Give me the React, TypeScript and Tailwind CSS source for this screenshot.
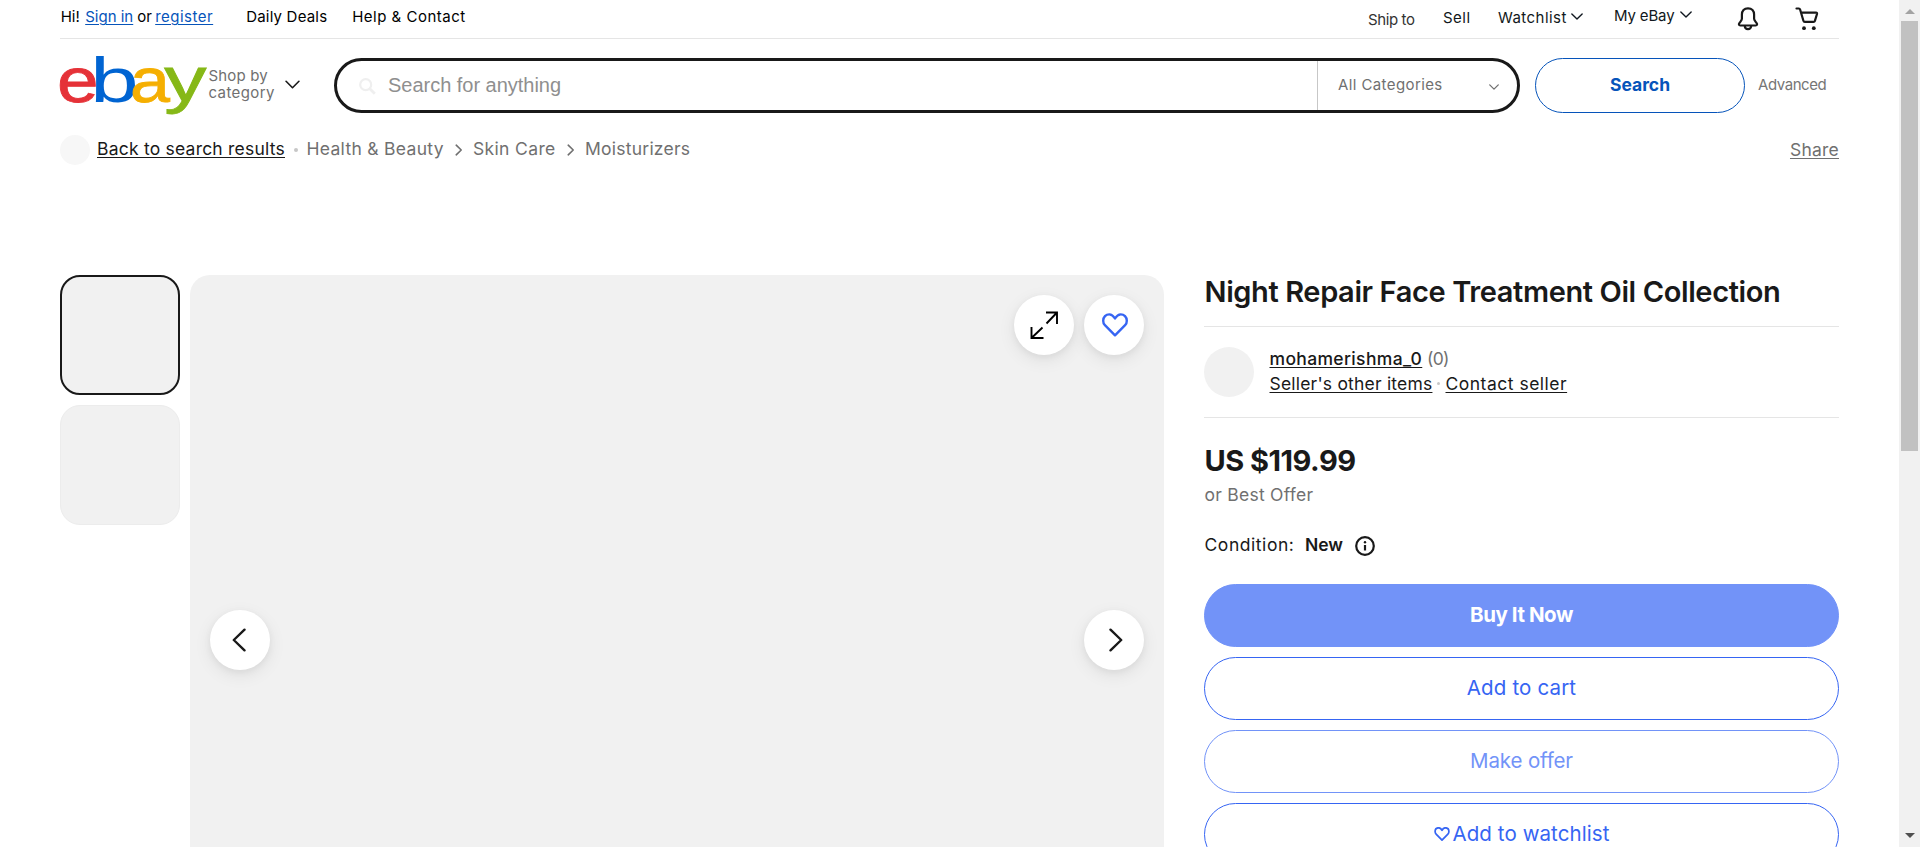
import type { ReactNode } from "react";

function Chevron({ className, width = 1.6 }: { className: string; width?: number }) {
  return (
    <svg viewBox="0 0 14 8" fill="none" stroke="currentColor" strokeWidth={width} strokeLinecap="round" strokeLinejoin="round" className={className}>
      <path d="M1 1l6 6 6-6" />
    </svg>
  );
}

function Crumb({ className }: { className: string }) {
  return (
    <svg viewBox="0 0 8 12" fill="none" stroke="#707070" strokeWidth="1.6" strokeLinecap="round" strokeLinejoin="round" className={className}>
      <path d="M1.2 1.2L6.2 6l-5 4.800" />
    </svg>
  );
}

function Heart({ className, stroke }: { className: string; stroke: number }) {
  return (
    <svg viewBox="0 0 26 24" fill="none" stroke="#3665f3" strokeWidth={stroke} strokeLinejoin="round" className={className}>
      <path d="M13 22.300L2.900 12.200C1.700 11 1.200 9.600 1.200 7.700C1.200 4.100 3.900 1.400 7.300 1.400C9.700 1.400 11.300 2.700 13 5.500C14.700 2.700 16.300 1.400 18.700 1.400C22.100 1.400 24.800 4.100 24.800 7.700C24.800 9.600 24.300 11 23.100 12.200Z" />
    </svg>
  );
}

function RoundButton({ label, children }: { label: string; children: ReactNode }) {
  return (
    <button aria-label={label} className="flex size-[60px] items-center justify-center rounded-full bg-white shadow-[0_5px_17px_rgba(0,0,0,0.08),0_2px_7px_rgba(0,0,0,0.05)]">
      {children}
    </button>
  );
}

function Logo() {
  return (
    <svg viewBox="0 0 148 76" className="mt-[10px] h-[76px] w-[148px] shrink-0 overflow-visible font-['Liberation_Sans',Arial,sans-serif] text-[63px]">
      <text transform="translate(-3 53.200) scale(1.187 1)" fill="#e53238" stroke="#e53238" strokeWidth="0.800">e</text>
      <text transform="translate(30.300 53.200) scale(1.380 1)" fill="#0064d2">b</text>
      <text transform="translate(70 53.200) scale(1.140 1)" fill="#f5af02" stroke="#f5af02" strokeWidth="0.800">a</text>
      <text transform="translate(104.300 52.200) scale(1.340 1)" fill="#86b817" stroke="#86b817" strokeWidth="0.800">y</text>
    </svg>
  );
}

function TopBar() {
  return (
    <nav className="flex h-[39px] items-start justify-between border-b border-[#e5e5e5] text-[15px] leading-5 whitespace-nowrap text-[#111820]">
      <div className="flex pt-[7px] pl-[0.700px] text-black">
        <span className="w-[24.500px]">Hi!</span>
        <span className="w-[52px]">
          <a className="text-[#0654ba] underline decoration-1 underline-offset-[1.500px]">Sign in</a>
        </span>
        <span className="w-[18px]">or</span>
        <span className="w-[91px]">
          <a className="tracking-[0.490px] text-[#0654ba] underline decoration-1 underline-offset-[1.500px]">register</a>
        </span>
        <span className="w-[106px] tracking-[0.200px]">Daily Deals</span>
        <span className="tracking-[0.500px]">Help &amp; Contact</span>
      </div>
      <div className="flex w-[471px] items-start">
        <span className="mt-[10px] w-[75px] tracking-[-0.400px] text-[#333]">Ship to</span>
        <span className="mt-2 w-[55px] tracking-[0.500px]">Sell</span>
        <span className="mt-2 w-[73px] tracking-[0.450px]">Watchlist</span>
        <Chevron className="mt-[13px] h-[7px] w-[12px]" />
        <span className="mt-[6px] ml-[31px] w-[66px] tracking-[-0.150px]">My eBay</span>
        <Chevron className="mt-[11px] h-[7px] w-[12px]" />
        <svg viewBox="0 0 22 24" fill="none" stroke="#191919" strokeWidth="2.200" strokeLinejoin="round" className="mt-[7px] ml-[44.500px] h-6 w-[22px]">
          <path d="M11 1.300c-3.900 0-6.100 2.700-6.100 6.300v4.200c0 1.500-1.200 2.600-2.500 4.300-.9 1.200-.5 2.400.9 2.400h15.400c1.400 0 1.800-1.200.9-2.400-1.300-1.700-2.500-2.800-2.500-4.300V7.600c0-3.600-2.200-6.300-6.100-6.300z" />
          <path d="M7.800 18.800c0 2.100 1.300 3.300 3.200 3.300s3.200-1.200 3.200-3.300" />
        </svg>
        <svg viewBox="0 0 24 24" fill="none" stroke="#191919" strokeWidth="2.200" strokeLinecap="round" strokeLinejoin="round" className="mt-[7px] ml-[36px] size-6">
          <path d="M1.500 1.500h2.300c.7 0 1.100.3 1.300 1l3.300 11.300c.2.700.7 1.100 1.400 1.100h8.700c.7 0 1.200-.4 1.400-1l2.100-6.900c.2-.8-.2-1.400-1-1.400H6.200" />
          <circle cx="9" cy="21.200" r="1.900" fill="#191919" stroke="none" />
          <circle cx="18.800" cy="21.200" r="1.900" fill="#191919" stroke="none" />
        </svg>
      </div>
    </nav>
  );
}

function SearchRow() {
  return (
    <div className="flex h-[86px] items-start whitespace-nowrap">
      <Logo />
      <button className="mt-[28px] ml-[0.500px] flex w-[125.500px] items-start text-left text-[15px] leading-[17px] text-[#707070]">
        <span className="w-[76.500px]">
          <span className="block tracking-[0.150px]">Shop by</span>
          <span className="block tracking-[0.400px]">category</span>
        </span>
        <Chevron className="mt-[13px] h-[9px] w-[15px] text-[#191919]" width={1.5} />
      </button>
      <div className="mt-[19px] flex h-[55px] w-[1185.500px] items-stretch rounded-full border-[3px] border-[#191919]">
        <div className="flex flex-1 items-center pl-[22px]">
          <svg viewBox="0 0 17 17" fill="none" stroke="#efefef" strokeWidth="2.200" className="mt-[1px] size-[17px]">
            <circle cx="6.700" cy="6.700" r="5.500" />
            <path d="M10.800 10.800l5 5" strokeWidth="2.800" />
          </svg>
          <span className="-mt-[2px] ml-[12px] font-['Liberation_Sans',Arial,sans-serif] text-[20px] leading-6 tracking-[-0.020px] text-[#8f8f8f]">Search for anything</span>
        </div>
        <div className="flex w-[199.500px] items-center justify-between border-l border-[#c7c7c7] pr-[18px] pl-[20px] text-[15px] text-[#707070]">
          <span className="tracking-[0.400px]">All Categories</span>
          <Chevron className="mt-[2px] h-[6px] w-[10px]" width={1.8} />
        </div>
      </div>
      <button className="mt-[19px] ml-[15.500px] flex h-[55px] w-[210px] items-center justify-center rounded-full border border-[#0654ba] pb-[1px] text-[17.500px] font-bold text-[#0654ba]">
        Search
      </button>
      <a className="mt-[35.500px] ml-[13px] text-[15px] leading-5 tracking-[-0.430px] text-[#767676]">Advanced</a>
    </div>
  );
}

function Breadcrumbs() {
  return (
    <div className="mt-[10px] flex h-[30px] items-center justify-between text-[17.500px] leading-[26px] whitespace-nowrap text-[#707070]">
      <div className="flex items-center">
        <span className="size-[30px] rounded-full bg-[#f7f7f7]" />
        <a className="-mt-[3px] ml-[7px] w-[197px] text-[#191919]">
          <span className="tracking-[0.220px] underline decoration-1 underline-offset-2">Back to search results</span>
        </a>
        <span className="size-[4px] rounded-full bg-[#c7c7c7]" />
        <a className="-mt-[3px] ml-[8.500px] w-[148.500px] tracking-[0.300px]">Health &amp; Beauty</a>
        <Crumb className="h-3 w-2" />
        <a className="-mt-[3px] ml-[10px] w-[94px] tracking-[0.350px]">Skin Care</a>
        <Crumb className="h-3 w-2" />
        <a className="-mt-[3px] ml-[10px] tracking-[0.240px]">Moisturizers</a>
      </div>
      <a className="-mt-px tracking-[0.220px] underline decoration-1 underline-offset-2">Share</a>
    </div>
  );
}

function Gallery() {
  return (
    <div className="flex w-[1104px] gap-[10px]">
      <div className="flex flex-col gap-[10px]">
        <div className="size-[120px] rounded-[20px] border-2 border-[#191919] bg-[#f1f1f1]" />
        <div className="size-[120px] rounded-[20px] border border-[#ececec] bg-[#f1f1f1]" />
      </div>
      <div className="flex h-[700px] w-[974px] flex-col gap-[255px] rounded-[20px] bg-[#f1f1f1] p-5">
        <div className="flex justify-end gap-[10px]">
          <RoundButton label="Expand">
            <svg viewBox="0 0 28 28" fill="none" stroke="#000" strokeWidth="1.900" className="size-7">
              <path d="M16.500 12.500L27 1.500M16 1.500h11v11.500M12.500 16.500L1.500 27M1.500 16v11h12" />
            </svg>
          </RoundButton>
          <RoundButton label="Watch">
            <Heart className="ml-px h-6 w-[26px]" stroke={2.4} />
          </RoundButton>
        </div>
        <div className="flex justify-between">
          <RoundButton label="Previous">
            <svg viewBox="0 0 14 24" fill="none" stroke="#191919" strokeWidth="2.400" strokeLinecap="round" strokeLinejoin="round" className="mr-[3px] h-6 w-[14px]">
              <path d="M12.500 1.700L1.800 12l10.700 10.300" />
            </svg>
          </RoundButton>
          <RoundButton label="Next">
            <svg viewBox="0 0 14 24" fill="none" stroke="#191919" strokeWidth="2.400" strokeLinecap="round" strokeLinejoin="round" className="ml-[3px] h-6 w-[14px]">
              <path d="M1.500 1.700L12.200 12 1.500 22.300" />
            </svg>
          </RoundButton>
        </div>
      </div>
    </div>
  );
}

const action = "flex h-[63px] shrink-0 items-center justify-center rounded-full border pb-[1px] text-[20.500px]";

function Details() {
  return (
    <section className="flex w-[635px] flex-col text-[17.500px] whitespace-nowrap text-[#191919]">
      <h1 className="flex h-[52px] items-start border-b border-[#e5e5e5] pl-[0.500px] text-[29px] leading-[34px] font-semibold tracking-[-0.390px]">
        Night Repair Face Treatment Oil Collection
      </h1>
      <div className="flex h-[91px] items-center border-b border-[#e5e5e5]">
        <span className="size-[50px] rounded-full bg-[#f1f1f1]" />
        <div className="-mt-[2px] ml-[15.500px] leading-[25px]">
          <div className="flex">
            <span className="w-[157.500px]">
              <a className="font-medium tracking-[0.350px] underline decoration-1 underline-offset-2">mohamerishma_0</a>
            </span>
            <span className="tracking-[-0.700px] text-[#707070]">(0)</span>
          </div>
          <div className="flex items-center">
            <span className="w-[167px]">
              <a className="tracking-[0.200px] underline decoration-1 underline-offset-2">Seller's other items</a>
            </span>
            <span className="mr-[6px] size-[3px] rounded-full bg-[#c7c7c7]" />
            <a className="tracking-[0.500px] underline decoration-1 underline-offset-2">Contact seller</a>
          </div>
        </div>
      </div>
      <div className="mt-[25px] pl-[0.500px] text-[29px] leading-9 font-bold tracking-[-0.500px]">US $119.99</div>
      <div className="mt-[4px] pl-[0.500px] leading-6 tracking-[0.250px] text-[#707070]">or Best Offer</div>
      <div className="mt-[26px] flex items-center pl-[0.500px] leading-6">
        <span className="w-[100.500px] tracking-[0.550px]">Condition:</span>
        <span className="w-[50px] font-semibold">New</span>
        <svg viewBox="0 0 20 20" fill="none" stroke="#191919" strokeWidth="2.200" className="mt-[2px] size-5">
          <circle cx="10" cy="10" r="8.800" />
          <path d="M10 9v5.500" />
          <circle cx="10" cy="6.200" r="1.200" fill="#191919" stroke="none" />
        </svg>
      </div>
      <div className="mt-[27px] flex flex-col gap-[10px]">
        <button className={`${action} border-[#7293f8] bg-[#7293f8] font-bold tracking-[-0.450px] text-white`}>Buy It Now</button>
        <button className={`${action} border-[#3665f3] tracking-[0.150px] text-[#3665f3]`}>Add to cart</button>
        <button className={`${action} border-[#7293f8] tracking-[-0.150px] text-[#7293f8]`}>Make offer</button>
        <button className={`${action} border-[#3665f3] tracking-[0.080px] text-[#3665f3]`}>
          <Heart className="mr-[3px] h-[14px] w-4" stroke={3} />
          Add to watchlist
        </button>
      </div>
    </section>
  );
}

export default function App() {
  return (
    <div className="flex h-[847px] w-[1920px] overflow-hidden bg-white font-['Inter',sans-serif]">
      <main className="w-[1899px] shrink-0 pl-[60px]">
        <div className="w-[1779px]">
          <TopBar />
          <SearchRow />
          <Breadcrumbs />
          <div className="mt-[110px] flex gap-[40px]">
            <Gallery />
            <Details />
          </div>
        </div>
      </main>
      <div className="flex w-[21px] flex-col items-center bg-[#f1f1f1]">
        <svg viewBox="0 0 10 5" className="mt-[9px] h-[5px] w-[10px]">
          <path d="M5 0l5 5H0z" fill="#a3a3a3" />
        </svg>
        <div className="mt-[7px] h-[430px] w-[17px] bg-[#c1c1c1]" />
        <svg viewBox="0 0 10 5" className="mt-auto mb-[9px] h-[5px] w-[10px]">
          <path d="M0 0h10L5 5z" fill="#505050" />
        </svg>
      </div>
    </div>
  );
}
